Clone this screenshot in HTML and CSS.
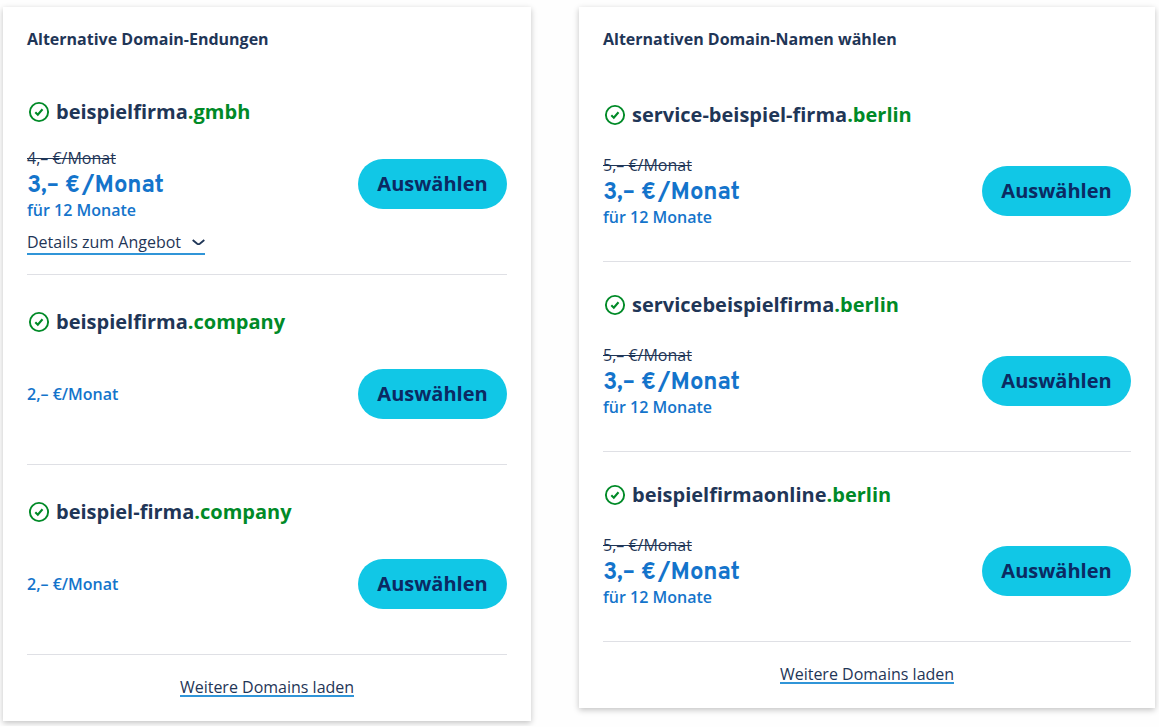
FILE: index.html
```html
<!DOCTYPE html>
<html lang="de">
<head>
<meta charset="utf-8">
<meta name="viewport" content="width=device-width, initial-scale=1">
<title>Domain-Auswahl</title>
<link rel="stylesheet" href="styles.css">
</head>
<body>
<svg class="sprite" aria-hidden="true">
  <symbol id="check" viewBox="0 0 24 24">
    <circle cx="12" cy="12" r="9.1" fill="none" stroke="currentColor" stroke-width="1.9"/>
    <path d="M8.300 12.300l2.500 2.400 4.700-5.500" fill="none" stroke="currentColor" stroke-width="2.1"/>
  </symbol>
</svg>
<main class="columns">
  <section class="card card-endings">
    <h2 class="card-title">Alternative Domain-Endungen</h2>
    <ul class="offers">
      <li class="offer offer-detailed">
        <h3 class="domain"><svg class="check"><use href="#check"/></svg><span>beispielfirma<span class="tld">.gmbh</span></span></h3>
        <div class="offer-row">
          <div class="price"><s class="old">4,– €/Monat</s><strong class="now">3,– €<span class="per">/Monat</span></strong><span class="term">für 12 Monate</span></div>
          <button class="select" type="button">Auswählen</button>
        </div>
        <button class="details" type="button">Details zum Angebot
          <svg class="chevron" viewBox="0 0 13 7"><path d="M.7 1l4.500 3.700q1.300 1 2.600 0L12.300 1" fill="none" stroke="currentColor" stroke-width="1.8"/></svg>
        </button>
      </li>
      <li class="offer">
        <h3 class="domain"><svg class="check"><use href="#check"/></svg><span>beispielfirma<span class="tld">.company</span></span></h3>
        <div class="offer-row">
          <div class="price"><span class="term">2,– €/Monat</span></div>
          <button class="select" type="button">Auswählen</button>
        </div>
      </li>
      <li class="offer">
        <h3 class="domain"><svg class="check"><use href="#check"/></svg><span>beispiel-firma<span class="tld">.company</span></span></h3>
        <div class="offer-row">
          <div class="price"><span class="term">2,– €/Monat</span></div>
          <button class="select" type="button">Auswählen</button>
        </div>
      </li>
    </ul>
    <p class="more"><a class="more-link" href="#">Weitere Domains laden</a></p>
  </section>
  <section class="card card-names">
    <h2 class="card-title">Alternativen Domain-Namen wählen</h2>
    <ul class="offers">
      <li class="offer">
        <h3 class="domain"><svg class="check"><use href="#check"/></svg><span>service-beispiel-firma<span class="tld">.berlin</span></span></h3>
        <div class="offer-row">
          <div class="price"><s class="old">5,– €/Monat</s><strong class="now">3,– €<span class="per">/Monat</span></strong><span class="term">für 12 Monate</span></div>
          <button class="select" type="button">Auswählen</button>
        </div>
      </li>
      <li class="offer">
        <h3 class="domain"><svg class="check"><use href="#check"/></svg><span>servicebeispielfirma<span class="tld">.berlin</span></span></h3>
        <div class="offer-row">
          <div class="price"><s class="old">5,– €/Monat</s><strong class="now">3,– €<span class="per">/Monat</span></strong><span class="term">für 12 Monate</span></div>
          <button class="select" type="button">Auswählen</button>
        </div>
      </li>
      <li class="offer">
        <h3 class="domain"><svg class="check"><use href="#check"/></svg><span>beispielfirmaonline<span class="tld">.berlin</span></span></h3>
        <div class="offer-row">
          <div class="price"><s class="old">5,– €/Monat</s><strong class="now">3,– €<span class="per">/Monat</span></strong><span class="term">für 12 Monate</span></div>
          <button class="select" type="button">Auswählen</button>
        </div>
      </li>
    </ul>
    <p class="more"><a class="more-link" href="#">Weitere Domains laden</a></p>
  </section>
</main>
</body>
</html>
```
FILE: styles.css
```css
* { box-sizing: border-box; }

body {
  margin: 0;
  background: #fefefe;
  color: #1f3657;
  font: 16px/24px "Open Sans", "Noto Sans", sans-serif;
}

h2, h3, p, ul { margin: 0; padding: 0; }
ul { list-style: none; }
button { font-family: inherit; color: inherit; border: 0; cursor: pointer; }

.sprite { display: none; }

.columns {
  display: grid;
  grid-template-columns: 11fr 12fr;
  align-items: start;
  gap: 48px;
  padding: 7px 4px 5px 3px;
}

.card {
  padding: 20px 24px 22px;
  background: #fff;
  box-shadow: 0 2px 6px rgba(0, 0, 0, .24);
}

.card-title { font-size: 16px; line-height: 24px; font-weight: 700; }
.offers { padding-top: 14px; }
.card-names .offers { padding-top: 21px; }

.offer { padding: 33px 0 32px; border-bottom: 1px solid #dfe0e5; }
.offer-detailed { padding-bottom: 19px; }
.card-names .offer { padding-top: 29px; }

.domain {
  display: flex;
  align-items: center;
  gap: 5px;
  font-size: 20px;
  line-height: 28px;
  font-weight: 700;
}
.check { width: 24px; height: 24px; flex: none; color: #008a27; }
.tld { color: #008a27; }

.offer-row {
  display: flex;
  align-items: center;
  justify-content: space-between;
  min-height: 76px;
  margin-top: 20px;
}
.card-names .offer-row { margin-top: 24px; }

.price { display: flex; flex-direction: column; color: #1474cb; }
.old { color: #1f3657; line-height: 24px; }
.now { padding-top: 4px; font: 700 24px/24px Overpass, Roboto, sans-serif; }
.per { margin-left: 2px; }
.term { font-weight: 600; line-height: 24px; }

.select {
  min-width: 149px;
  height: 50px;
  padding: 0 19px;
  border-radius: 25px;
  background: #11c7e6;
  color: #0b2a63;
  font-size: 20px;
  line-height: 28px;
  font-weight: 700;
}

.details {
  display: flex;
  align-items: center;
  gap: 11px;
  margin-top: 10px;
  padding: 0;
  background: none;
  border-bottom: 2px solid #3095d8;
  font-size: 16px;
  line-height: 21px;
}
.chevron { width: 13px; height: 7px; }

.more { padding-top: 20px; text-align: center; }
.more-link {
  color: inherit;
  text-decoration: none;
  border-bottom: 2px solid #3095d8;
  display: inline-block;
  line-height: 16px;
}

@media (max-width: 760px) {
  .columns { grid-template-columns: 1fr; }
}
```
